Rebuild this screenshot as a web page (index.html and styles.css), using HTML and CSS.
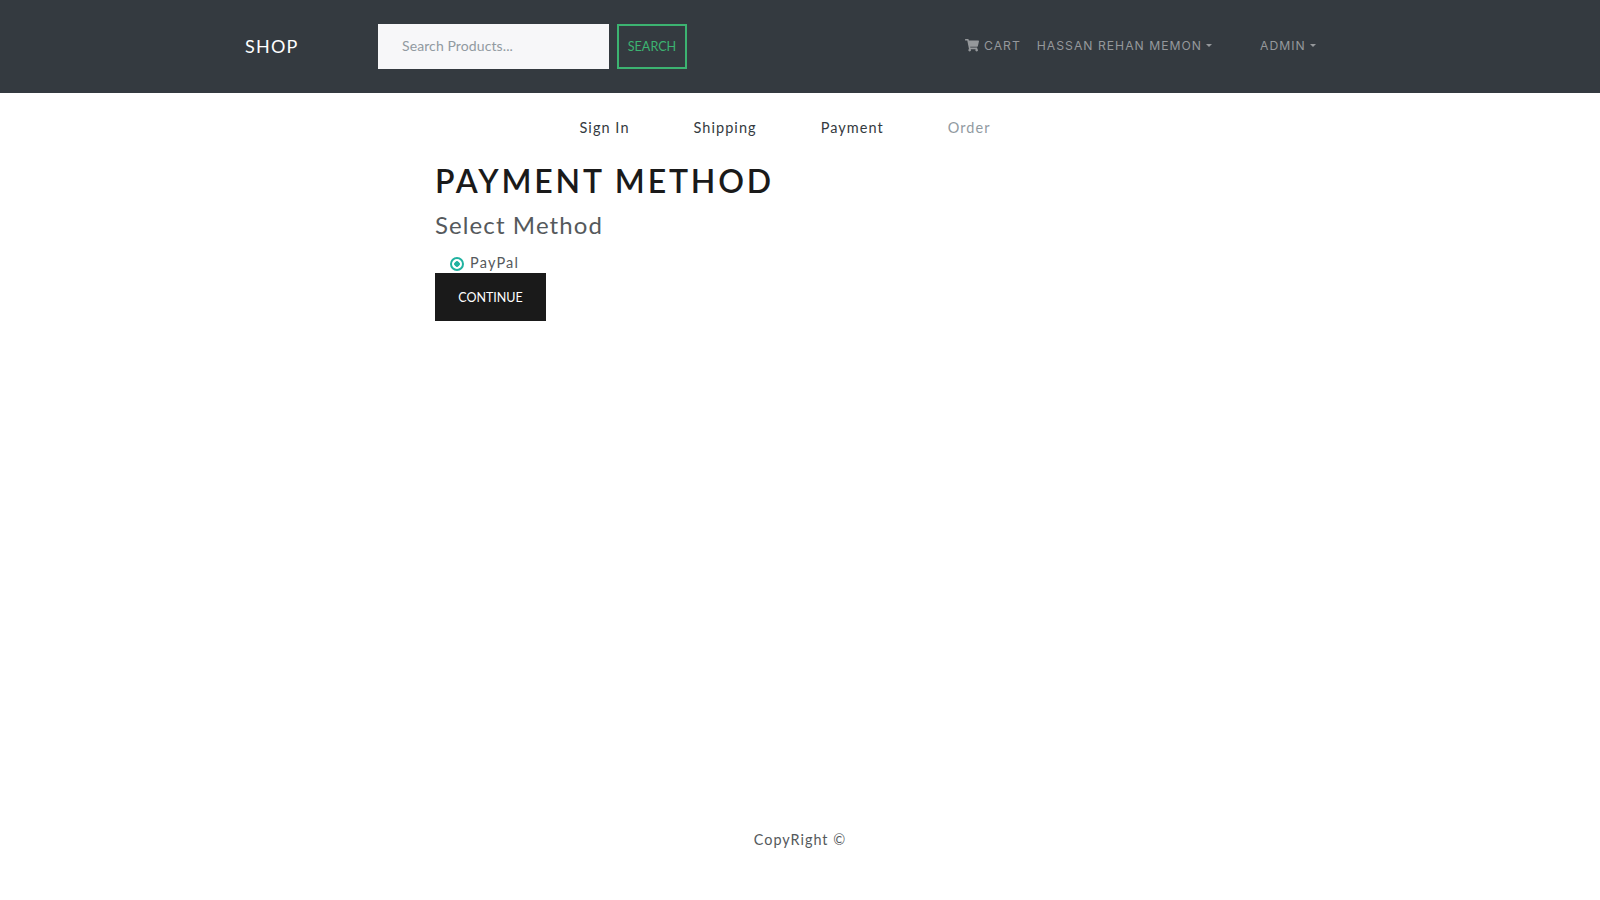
FILE: index.html
```html
<!DOCTYPE html>
<html lang="en">
<head>
<meta charset="utf-8">
<title>Shop</title>
<link rel="stylesheet" href="styles.css">
</head>
<body>
<header class="navbar">
  <a class="brand" href="#">SHOP</a>
  <form class="search">
    <input class="search-input" type="text" placeholder="Search Products...">
    <button class="search-btn" type="button">SEARCH</button>
  </form>
  <nav class="nav-links">
    <a class="nav-link" href="#"><svg class="cart" viewBox="0 0 576 512"><path fill="currentColor" d="M528.12 301.32l47.27-208C578.81 78.31 567.41 64 552 64H159.21l-9.17-44.81C147.76 8.02 137.93 0 126.53 0H24C10.75 0 0 10.75 0 24v16c0 13.25 10.75 24 24 24h69.88l70.25 343.43C147.32 417.1 136 435.22 136 456c0 30.93 25.07 56 56 56s56-25.07 56-56c0-15.67-6.45-29.83-16.82-40h209.64C430.45 426.17 424 440.33 424 456c0 30.93 25.07 56 56 56s56-25.07 56-56c0-22.17-12.89-41.32-31.58-50.41l5.52-24.28c3.41-15.01-8-29.31-23.4-29.31H218.1l-6.55-32h293.16c11.2 0 20.92-7.75 23.41-18.68z"/></svg>CART</a>
    <a class="nav-link user" href="#">HASSAN REHAN MEMON<span class="caret"></span></a>
    <a class="nav-link" href="#">ADMIN<span class="caret"></span></a>
  </nav>
</header>
<main class="main">
  <nav class="steps">
    <a class="step" href="#">Sign In</a>
    <a class="step" href="#">Shipping</a>
    <a class="step" href="#">Payment</a>
    <a class="step disabled" href="#">Order</a>
  </nav>
  <section class="content">
    <h1 class="title">PAYMENT METHOD</h1>
    <h2 class="legend">Select Method</h2>
    <label class="radio-row"><span class="radio"></span>PayPal</label>
    <button class="continue" type="button">CONTINUE</button>
  </section>
</main>
<footer class="footer">CopyRight ©</footer>
</body>
</html>
```
FILE: styles.css
```css
* { box-sizing: border-box; }
html, body { height: 100%; }
body {
  margin: 0;
  height: 900px;
  overflow: hidden;
  display: flex;
  flex-direction: column;
  background: #fff;
  font-family: "Lato", "Open Sans", sans-serif;
  color: #55595c;
}
a { text-decoration: none; }
.navbar {
  height: 93px;
  background: #343a40;
  display: flex;
  align-items: center;
  padding-left: 245px;
}
.brand {
  color: #fff;
  font-size: 18px;
  line-height: 20px;
  letter-spacing: 1.2px;
  width: 133px;
  margin-bottom: 2px;
}
.search { display: flex; gap: 8px; }
.search-input {
  width: 231px;
  height: 45px;
  border: 0;
  padding: 0 24px 2px;
  background: #f7f7f9;
  font: 14px "Lato", sans-serif;
  letter-spacing: 0.1px;
  outline: none;
}
.search-input::placeholder { color: #919aa1; }
.search-btn {
  width: 70px;
  height: 45px;
  border: 2px solid #3cb371;
  background: transparent;
  color: #3cb371;
  padding: 0 0 1px;
  font: 12.6px "Lato", sans-serif;
}
.nav-links {
  display: flex;
  align-items: center;
  margin-left: 278px;
  margin-bottom: 2px;
}
.nav-link {
  color: #95989b;
  font-family: "Inter", sans-serif;
  font-size: 12.2px;
  letter-spacing: 1px;
  display: flex;
  align-items: center;
  margin-right: 16px;
}
.user { margin-right: 48px; }
.cart { width: 14px; height: 12.5px; margin-right: 5px; }
.caret {
  width: 0;
  height: 0;
  margin-left: 4px;
  border-left: 3px solid transparent;
  border-right: 3px solid transparent;
  border-top: 3px solid currentColor;
}
.main { flex: 1; display: flex; flex-direction: column; }
.steps {
  display: flex;
  justify-content: center;
  gap: 64px;
  height: 68px;
  padding-top: 27px;
  padding-right: 30px;
}
.step {
  color: #343a40;
  font-size: 14.5px;
  line-height: 16px;
  letter-spacing: 1.05px;
}
.step.disabled { color: #919aa1; }
.content { padding-left: 435px; }
.title {
  margin: 0;
  color: #1a1a1a;
  font-size: 32px;
  font-weight: 600;
  line-height: 40px;
  letter-spacing: 2.85px;
}
.legend {
  margin: 4px 0 0;
  color: #55595c;
  font-size: 24px;
  font-weight: 400;
  line-height: 40px;
  letter-spacing: 1.1px;
}
.radio-row {
  display: flex;
  align-items: center;
  height: 20px;
  margin-top: 7px;
  margin-bottom: 1px;
  padding-left: 15px;
  font-size: 14.5px;
  letter-spacing: 1.2px;
}
.radio {
  width: 14px;
  height: 14px;
  margin: 3px 6px 0 0;
  border-radius: 50%;
  border: 2px solid #20b2a0;
  background: radial-gradient(circle, #20b2a0 0 2.5px, #fff 3px);
}
.continue {
  display: block;
  width: 111px;
  height: 48px;
  border: 0;
  background: #1a1a1a;
  color: #fff;
  padding: 0;
  font: 12.5px "Lato", sans-serif;
}
.footer {
  height: 70px;
  text-align: center;
  font-size: 14.4px;
  letter-spacing: 1px;
  line-height: 16px;
  padding-top: 2px;
}
```
